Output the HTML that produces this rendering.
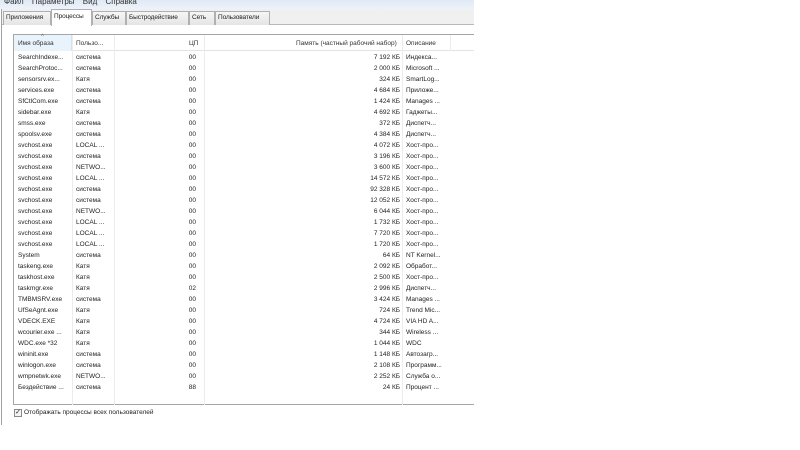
<!DOCTYPE html><html><head><meta charset="utf-8"><style>
*{margin:0;padding:0;box-sizing:border-box}
body{width:800px;height:450px;background:#fff;font-family:"Liberation Sans","DejaVu Sans",sans-serif;font-size:7px;color:#222;position:relative;overflow:hidden}
.a{position:absolute;white-space:nowrap}
.menu{left:0;top:0;width:474px;height:9px;background:linear-gradient(#dfe9f5,#eef3fa);overflow:hidden}
.menu span{position:absolute;top:-3px;left:4px;font-size:8px;line-height:9px;color:#333;word-spacing:6px}
.strip{left:1px;top:9px;width:473px;height:16px;background:#f0f0f0;border-bottom:1px solid #b9b9b9}
.tab{top:11px;height:14px;border:1px solid #b0b0b0;border-bottom:none;background:linear-gradient(#f6f6f6,#e4e4e4);line-height:12px;padding:0 2px;font-size:6.5px;overflow:hidden;letter-spacing:-0.1px}
.sel{top:9px;height:17px;background:#fff;z-index:2;line-height:14px}
.lb{left:1px;top:9px;width:1px;height:416px;background:#a0a0a0}
.box{left:13px;top:34px;width:461px;height:371px;border:1px solid #a5a5a5;border-right:none}
.hdr{left:14px;top:35px;width:460px;height:16px;border-bottom:1px solid #e3e3e3;background:#fff}
.h{top:35px;height:16px;line-height:18px;font-size:6.5px;color:#333}
.v{top:35px;width:1px;height:370px;background:#ececec}
.r{font-size:6.5px;line-height:11px;color:#222}
</style></head><body>
<div class="a menu"><span>Файл Параметры Вид Справка</span></div>
<div class="a strip"></div>
<div class="a lb"></div>
<div class="a tab" style="left:3px;width:48px">Приложения</div>
<div class="a tab sel" style="left:51px;width:41px">Процессы</div>
<div class="a tab" style="left:92px;width:34px">Службы</div>
<div class="a tab" style="left:126px;width:63px">Быстродействие</div>
<div class="a tab" style="left:189px;width:26px">Сеть</div>
<div class="a tab" style="left:215px;width:55px">Пользователи</div>
<div class="a box"></div>
<div class="a hdr"></div>
<div class="a" style="left:14px;top:35px;width:58px;height:16px;background:#e8f3fc;border-right:1px solid #cfe3f3"></div>
<div class="a" style="left:41px;top:34px;font-size:6px;color:#666">^</div>
<div class="a h" style="left:18px">Имя образа</div>
<div class="a h" style="left:76px">Пользо...</div>
<div class="a h" style="left:189px">ЦП</div>
<div class="a h" style="left:296px">Память (частный рабочий набор)</div>
<div class="a h" style="left:406px">Описание</div>
<div class="a v" style="left:72px"></div>
<div class="a v" style="left:114px"></div>
<div class="a v" style="left:204px"></div>
<div class="a v" style="left:402px"></div>
<div class="a v" style="left:450px;height:16px"></div>
<div id="rows"></div>
<div class="a" style="left:14px;top:409px;width:8px;height:8px;border:1px solid #8a8a8a;background:#f4f4f4;font-size:7px;line-height:6px;color:#224;text-align:center">✓</div>
<div class="a" style="left:24px;top:408px;font-size:6.5px;line-height:10px">Отображать процессы всех пользователей</div>
<script>
var d=[["SearchIndexe...","система","00","7 192 КБ","Индекса..."],["SearchProtoc...","система","00","2 000 КБ","Microsoft ..."],["sensorsrv.ex...","Катя","00","324 КБ","SmartLog..."],["services.exe","система","00","4 684 КБ","Приложе..."],["SfCtlCom.exe","система","00","1 424 КБ","Manages ..."],["sidebar.exe","Катя","00","4 692 КБ","Гаджеты..."],["smss.exe","система","00","372 КБ","Диспетч..."],["spoolsv.exe","система","00","4 384 КБ","Диспетч..."],["svchost.exe","LOCAL ...","00","4 072 КБ","Хост-про..."],["svchost.exe","система","00","3 196 КБ","Хост-про..."],["svchost.exe","NETWO...","00","3 600 КБ","Хост-про..."],["svchost.exe","LOCAL ...","00","14 572 КБ","Хост-про..."],["svchost.exe","система","00","92 328 КБ","Хост-про..."],["svchost.exe","система","00","12 052 КБ","Хост-про..."],["svchost.exe","NETWO...","00","6 044 КБ","Хост-про..."],["svchost.exe","LOCAL ...","00","1 732 КБ","Хост-про..."],["svchost.exe","LOCAL ...","00","7 720 КБ","Хост-про..."],["svchost.exe","LOCAL ...","00","1 720 КБ","Хост-про..."],["System","система","00","64 КБ","NT Kernel..."],["taskeng.exe","Катя","00","2 092 КБ","Обработ..."],["taskhost.exe","Катя","00","2 500 КБ","Хост-про..."],["taskmgr.exe","Катя","02","2 996 КБ","Диспетч..."],["TMBMSRV.exe","система","00","3 424 КБ","Manages ..."],["UfSeAgnt.exe","Катя","00","724 КБ","Trend Mic..."],["VDECK.EXE","Катя","00","4 724 КБ","VIA HD A..."],["wcourier.exe ...","Катя","00","344 КБ","Wireless ..."],["WDC.exe *32","Катя","00","1 044 КБ","WDC"],["wininit.exe","система","00","1 148 КБ","Автозагр..."],["winlogon.exe","система","00","2 108 КБ","Программ..."],["wmpnetwk.exe","NETWO...","00","2 252 КБ","Служба о..."],["Бездействие ...","система","88","24 КБ","Процент ..."]];
var h="";d.forEach(function(r,i){var t=52+i*11;
h+='<div class="a r" style="left:18px;top:'+t+'px">'+r[0]+'</div><div class="a r" style="left:76px;top:'+t+'px">'+r[1]+'</div><div class="a r" style="right:604px;top:'+t+'px">'+r[2]+'</div><div class="a r" style="right:400px;top:'+t+'px">'+r[3]+'</div><div class="a r" style="left:406px;top:'+t+'px">'+r[4]+'</div>';});
document.getElementById("rows").innerHTML=h;
</script>
</body></html>
